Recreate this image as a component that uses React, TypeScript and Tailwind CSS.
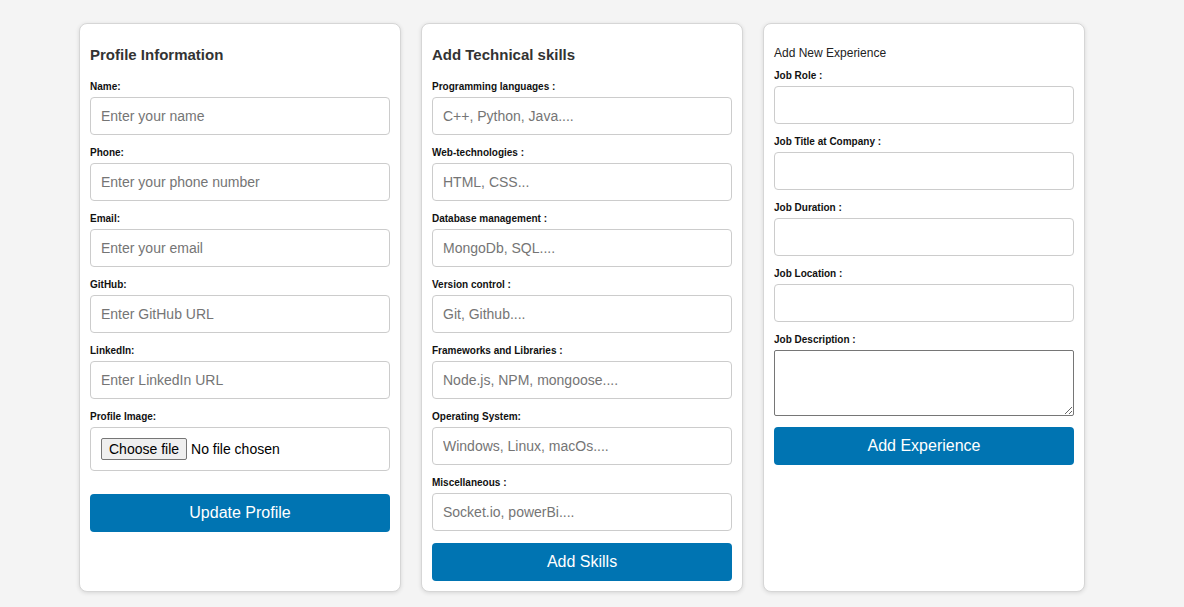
import React from 'react';

const field = "w-full h-[38px] border border-[#cccccc] rounded-[4px] px-[10px] text-[14px] text-[#222] placeholder:text-[#757575] bg-white outline-none mb-[12px]";
const label = "block text-[10px] leading-[12px] font-bold text-[#111] mb-[4px]";
const btn = "w-full h-[38px] rounded-[4px] bg-[#0074b2] text-white text-[16px]";

function Card({ children }: { children: React.ReactNode }) {
  return (
    <div className="w-[322px] bg-white border border-[#d6d6d6] rounded-[8px] shadow-[0_1px_4px_rgba(0,0,0,0.12)] p-[10px] flex flex-col">
      {children}
    </div>
  );
}

const profileFields = [
  { name: 'Name:', ph: 'Enter your name' },
  { name: 'Phone:', ph: 'Enter your phone number' },
  { name: 'Email:', ph: 'Enter your email' },
  { name: 'GitHub:', ph: 'Enter GitHub URL' },
  { name: 'LinkedIn:', ph: 'Enter LinkedIn URL' },
];

const skillFields = [
  { name: 'Programming languages :', ph: 'C++, Python, Java....' },
  { name: 'Web-technologies :', ph: 'HTML, CSS...' },
  { name: 'Database management :', ph: 'MongoDb, SQL....' },
  { name: 'Version control :', ph: 'Git, Github....' },
  { name: 'Frameworks and Libraries :', ph: 'Node.js, NPM, mongoose....' },
  { name: 'Operating System:', ph: 'Windows, Linux, macOs....' },
  { name: 'Miscellaneous :', ph: 'Socket.io, powerBi....' },
];

const jobFields = ['Job Role :', 'Job Title at Company :', 'Job Duration :', 'Job Location :'];

export default function App() {
  return (
    <div className="min-h-screen bg-[#f4f4f4] font-['Liberation_Sans',Arial,sans-serif] pl-[79px] pt-[23px] pb-[16px]">
      <div className="flex gap-[20px] items-stretch">
        {/* PROFILE */}
        <Card>
          <h2 className="text-[15px] leading-[17px] font-bold text-[#333] mt-[12px] mb-[18px]">Profile Information</h2>
          {profileFields.map(f => (
            <div key={f.name}>
              <label className={label}>{f.name}</label>
              <input className={field} placeholder={f.ph} />
            </div>
          ))}
          <label className={label}>Profile Image:</label>
          <label className="w-full h-[44px] border border-[#cccccc] rounded-[4px] px-[10px] flex items-center gap-[4px] text-[14px] text-black mb-[23px] cursor-pointer">
            <input type="file" className="hidden" />
            <span className="h-[22px] px-[7px] flex items-center bg-[#efefef] border border-[#767676] rounded-[2px]">Choose file</span>
            <span>No file chosen</span>
          </label>
          <button className={btn}>Update Profile</button>
        </Card>

        {/* SKILLS */}
        <Card>
          <h2 className="text-[15px] leading-[17px] font-bold text-[#333] mt-[12px] mb-[18px]">Add Technical skills</h2>
          {skillFields.map(f => (
            <div key={f.name}>
              <label className={label}>{f.name}</label>
              <input className={field} placeholder={f.ph} />
            </div>
          ))}
          <button className={btn}>Add Skills</button>
        </Card>

        {/* EXPERIENCE */}
        <Card>
          <h3 className="text-[12px] leading-[14px] font-medium text-[#222] mt-[12px] mb-[10px]">Add New Experience</h3>
          {jobFields.map(f => (
            <div key={f}>
              <label className={label}>{f}</label>
              <input className={field} />
            </div>
          ))}
          <label className={label}>Job Description :</label>
          <textarea className="w-full h-[66px] border border-[#767676] rounded-[2px] bg-white outline-none mb-[11px] block" />
          <button className={btn}>Add Experience</button>
        </Card>
      </div>
    </div>
  );
}
